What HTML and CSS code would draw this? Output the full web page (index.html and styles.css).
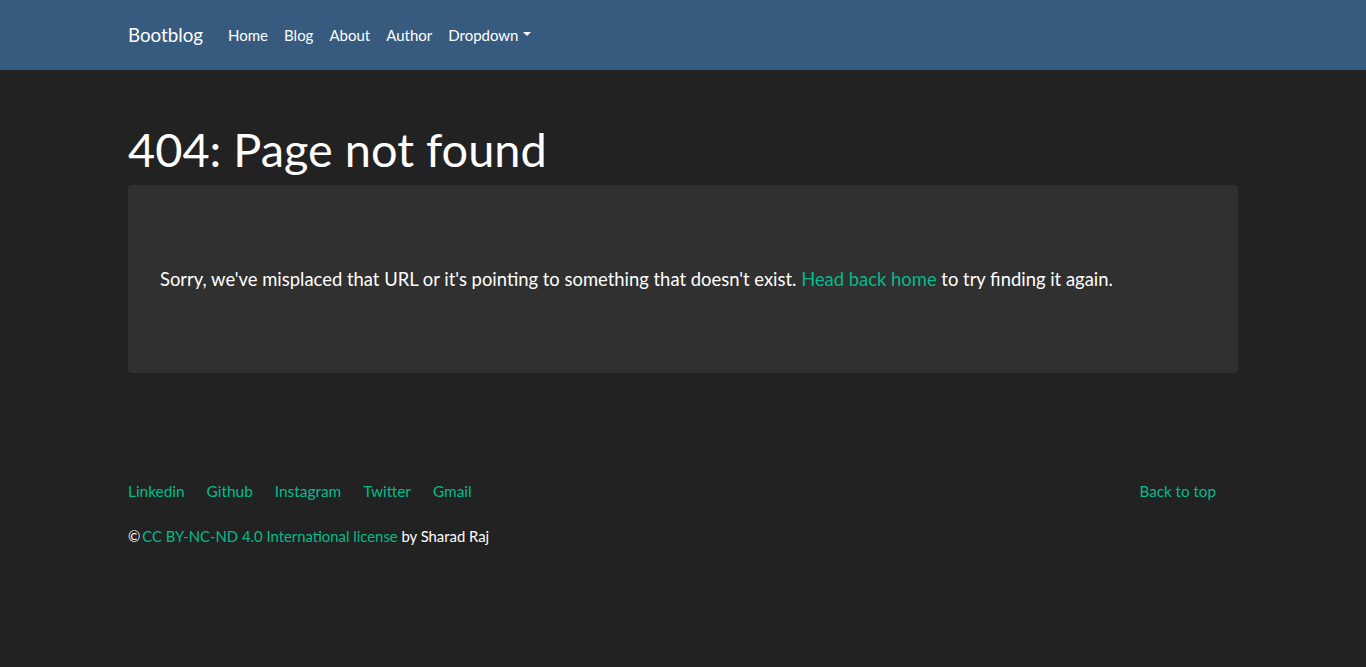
FILE: index.html
```html
<!DOCTYPE html>
<html lang="en">
<head>
<meta charset="utf-8">
<title>404: Page not found</title>
<link rel="stylesheet" href="styles.css">
</head>
<body>
<nav class="navbar">
  <div class="container nav-inner">
    <a class="brand" href="#">Bootblog</a>
    <ul class="nav">
      <li><a class="nav-link" href="#">Home</a></li>
      <li><a class="nav-link" href="#">Blog</a></li>
      <li><a class="nav-link" href="#">About</a></li>
      <li><a class="nav-link" href="#">Author</a></li>
      <li><a class="nav-link dropdown" href="#">Dropdown<span class="caret"></span></a></li>
    </ul>
  </div>
</nav>
<main class="container main">
  <h1 class="title">404: Page not found</h1>
  <div class="jumbotron">
    <p class="lead">Sorry, we've misplaced that URL or it's pointing to something that doesn't exist. <a href="#">Head back home</a> to try finding it again.</p>
  </div>
</main>
<footer class="container footer">
  <div class="footer-row">
    <ul class="social">
      <li><a href="#">Linkedin</a></li>
      <li><a href="#">Github</a></li>
      <li><a href="#">Instagram</a></li>
      <li><a href="#">Twitter</a></li>
      <li><a href="#">Gmail</a></li>
    </ul>
    <a class="top-link" href="#">Back to top</a>
  </div>
  <p class="copy">©&#8201;<a href="#">CC BY-NC-ND 4.0 International license</a> by Sharad Raj</p>
</footer>
</body>
</html>
```
FILE: styles.css
```css
* { box-sizing: border-box; }
html, body { margin: 0; padding: 0; }
body {
  background: #222222;
  color: #ffffff;
  font-family: Lato, "Liberation Sans", sans-serif;
  font-size: 15px;
  line-height: 1.5;
}
a { color: #00bc8c; text-decoration: none; }
.container {
  width: 1140px;
  margin: 0 auto;
  padding: 0 15px;
}
.navbar {
  background: #375a7f;
  height: 70px;
}
.nav-inner {
  display: flex;
  align-items: center;
  height: 70px;
}
.brand {
  color: #fff;
  font-size: 18.75px;
  line-height: 1;
  margin-right: 17px;
}
.nav {
  display: flex;
  list-style: none;
  margin: 0;
  padding: 0;
}
.nav-link {
  color: #fff;
  display: block;
  padding: 8px 8px;
}
.dropdown { display: flex; align-items: center; }
.caret {
  display: inline-block;
  margin-left: 4px;
  border-top: 4.5px solid #fff;
  border-left: 4px solid transparent;
  border-right: 4px solid transparent;
  margin-top: -2px;
}
.main { padding-top: 51px; }
.title {
  font-size: 46.9px;
  font-weight: 400;
  line-height: 1.2;
  margin: 0 0 7.7px;
}
.jumbotron {
  background: #303030;
  border-radius: 4px;
  padding: 80px 32px;
}
.lead {
  margin: 0;
  font-size: 18.42px;
  line-height: 28px;
}
.footer { padding-top: 107px; }
.footer-row {
  display: flex;
  justify-content: space-between;
  align-items: center;
}
.social {
  display: flex;
  gap: 22px;
  list-style: none;
  margin: 0;
  padding: 0;
  font-size: 15.4px;
}
.top-link { margin-right: 22px; font-size: 15.2px; }
.copy { margin: 22px 0 0; font-size: 14.85px; }
```
